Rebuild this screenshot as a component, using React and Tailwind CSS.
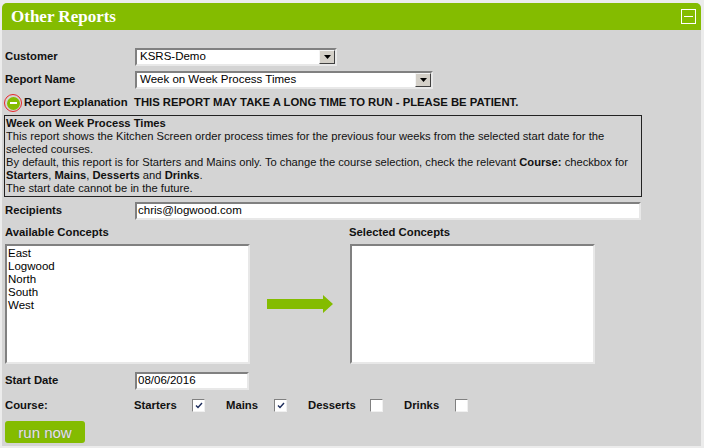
import React from "react";

const font = { fontFamily: '"Liberation Sans", Arial, sans-serif' };

const inset =
  "border-2 border-t-[#808080] border-l-[#808080] border-b-[#e8e8e8] border-r-[#e8e8e8] bg-white";

const SelectBox = ({ value, width }) => (
  <div className={`${inset} flex h-[18px] items-center ${width}`}>
    <span className="flex-1 truncate pl-[3px] text-[11.5px] leading-none text-black">{value}</span>
    <span className="flex h-[14px] w-[16px] items-center justify-center border border-t-[#f4f4f4] border-l-[#f4f4f4] border-b-[#404040] border-r-[#404040] bg-[#d4d0c8]">
      <svg width="7" height="4" viewBox="0 0 7 4">
        <path d="M0 0h7L3.5 4z" fill="#000" />
      </svg>
    </span>
  </div>
);

const TextBox = ({ value, width }) => (
  <div className={`${inset} flex h-[18px] items-center ${width}`}>
    <span className="pl-[1px] text-[11.5px] leading-none text-black">{value}</span>
  </div>
);

const Check = ({ checked }) => (
  <span className="flex h-[13px] w-[13px] items-center justify-center border border-t-[#808080] border-l-[#808080] border-b-[#f0f0f0] border-r-[#f0f0f0] bg-white">
    {checked && (
      <svg width="8" height="7" viewBox="0 0 8 7">
        <path d="M1 3.5l2 2 4-4.5" fill="none" stroke="#1a2a5a" strokeWidth="1.4" />
      </svg>
    )}
  </span>
);

const Label = ({ children }) => (
  <div className="w-[130px] shrink-0 text-[11.3px] font-bold leading-none text-[#111]">{children}</div>
);

const App = () => {
  const concepts = ["East", "Logwood", "North", "South", "West"];
  const courses = [
    { name: "Starters", checked: true, w: "w-[58px]" },
    { name: "Mains", checked: true, w: "w-[48px]" },
    { name: "Desserts", checked: false, w: "w-[62px]" },
    { name: "Drinks", checked: false, w: "w-[51px]" },
  ];

  return (
    <div className="h-[448px] w-[704px] bg-[#ececec] pl-[2px] pt-[3px]" style={font}>
      <div className="h-[443px] w-[699px] rounded-t-[5px] bg-[#d4d4d4]">
        <div className="flex h-[27px] items-center justify-between rounded-t-[5px] bg-[#84bc00] pl-[9px] pr-[5px]">
          <h1
            className="text-[17px] font-bold text-white"
            style={{ fontFamily: '"Liberation Serif", "Times New Roman", serif' }}
          >
            Other Reports
          </h1>
          <span className="flex h-[15px] w-[15px] items-center justify-center border border-white">
            <span className="h-px w-[9px] bg-white" />
          </span>
        </div>

        <div className="pl-[3px]">
          <div className="mt-[18px] flex items-center">
            <Label>Customer</Label>
            <SelectBox value="KSRS-Demo" width="w-[202px]" />
          </div>
          <div className="mt-[5px] flex items-center">
            <Label>Report Name</Label>
            <SelectBox value="Week on Week Process Times" width="w-[298px]" />
          </div>
          <div className="mt-[5px] flex h-[18px] items-center">
            <div className="flex w-[129px] shrink-0 items-center gap-[2px]">
              <span className="-ml-[1px] flex h-[18px] w-[18px] items-center justify-center rounded-full border-[1.5px] border-[#e8262a]">
                <span className="flex h-[13px] w-[13px] items-center justify-center rounded-full bg-[#84bc00]">
                  <span className="h-[1.5px] w-[7px] bg-white" />
                </span>
              </span>
              <span className="text-[11.3px] font-bold leading-none text-[#111]">Report Explanation</span>
            </div>
            <span className="text-[11.3px] font-bold leading-none text-[#111]">
              THIS REPORT MAY TAKE A LONG TIME TO RUN - PLEASE BE PATIENT.
            </span>
          </div>

          <div className="-ml-[1px] mt-[3px] w-[638px] whitespace-nowrap border border-[#222] px-[1px] pb-[1px] pt-[1px] text-[11.2px] leading-[13px] text-[#111]">
            <p className="font-bold">Week on Week Process Times</p>
            <p>
              This report shows the Kitchen Screen order process times for the previous four weeks from the selected start date for the
              <br />
              selected courses.
            </p>
            <p>
              By default, this report is for Starters and Mains only. To change the course selection, check the relevant{" "}
              <b>Course:</b> checkbox for
              <br />
              <b>Starters</b>, <b>Mains</b>, <b>Desserts</b> and <b>Drinks</b>.
            </p>
            <p>The start date cannot be in the future.</p>
          </div>

          <div className="mt-[5px] flex items-center">
            <Label>Recipients</Label>
            <TextBox value="chris@logwood.com" width="w-[506px]" />
          </div>

          <div className="mt-[5px] flex text-[11.3px] font-bold leading-[14px] text-[#111]">
            <div className="w-[344px]">Available Concepts</div>
            <div>Selected Concepts</div>
          </div>

          <div className="mt-[5px] flex items-center">
            <div className={`${inset} h-[120px] w-[245px] pl-[1px] pt-[1px] text-[11.5px] leading-[13px] text-black`}>
              {concepts.map((c) => (
                <div key={c}>{c}</div>
              ))}
            </div>
            <svg className="ml-[17px]" width="66" height="18" viewBox="0 0 66 18">
              <path d="M0 4h56V0l10 9-10 9v-4H0z" fill="#84bc00" />
            </svg>
            <div className={`${inset} ml-[17px] h-[120px] w-[245px]`} />
          </div>

          <div className="mt-[8px] flex items-center">
            <Label>Start Date</Label>
            <TextBox value="08/06/2016" width="w-[114px]" />
          </div>

          <div className="mt-[9px] flex items-center">
            <Label>Course:</Label>
            <div className="-ml-[1px] flex items-center">
              {courses.map((c) => (
                <div key={c.name} className="mr-[21px] flex items-center">
                  <span className={`${c.w} text-[11.3px] font-bold leading-none text-[#111]`}>{c.name}</span>
                  <Check checked={c.checked} />
                </div>
              ))}
            </div>
          </div>

          <button className="mt-[9px] flex h-[22px] w-[80px] items-center justify-center rounded-[3px] bg-[#84bc00] text-[15px] leading-none text-[#e6e6e6]">
            <span style={{ textShadow: "0 0 1px #6a6a6a" }}>run now</span>
          </button>
        </div>
      </div>
    </div>
  );
};

export default App;
